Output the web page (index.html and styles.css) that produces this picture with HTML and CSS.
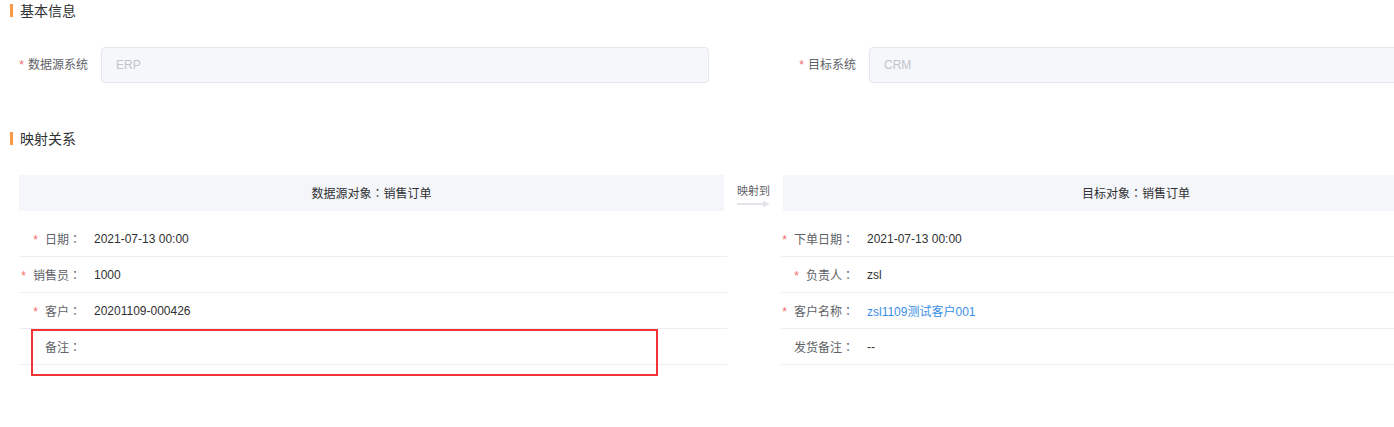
FILE: index.html
```html
<!DOCTYPE html>
<html lang="zh-CN">
<head>
<meta charset="utf-8">
<title>映射关系</title>
<link rel="stylesheet" href="styles.css">
</head>
<body>
<div class="page">
  <div class="section-title"><span class="bar"></span>基本信息</div>

  <div class="form-row">
    <div class="form-item">
      <label class="form-label"><span class="req">*</span>数据源系统</label>
      <div class="input">ERP</div>
    </div>
    <div class="form-item">
      <label class="form-label"><span class="req">*</span>目标系统</label>
      <div class="input">CRM</div>
    </div>
  </div>

  <div class="section-title second"><span class="bar"></span>映射关系</div>

  <div class="mapping">
    <div class="map-table src">
      <div class="map-head">数据源对象<span class="colon" lang="zh-TW">：</span>销售订单</div>
      <div class="map-row"><div class="lbl"><span class="req">*</span>日期<span class="colon" lang="zh-TW">：</span></div><div class="val">2021-07-13 00:00</div></div>
      <div class="map-row"><div class="lbl"><span class="req">*</span>销售员<span class="colon" lang="zh-TW">：</span></div><div class="val">1000</div></div>
      <div class="map-row"><div class="lbl"><span class="req">*</span>客户<span class="colon" lang="zh-TW">：</span></div><div class="val">20201109-000426</div></div>
      <div class="map-row annotated"><div class="lbl">备注<span class="colon" lang="zh-TW">：</span></div><div class="val"></div><div class="highlight"></div></div>
    </div>

    <div class="map-arrow">
      <span class="arrow-text">映射到</span>
      <svg class="arrow-icon" width="33" height="8" viewBox="0 0 33 8">
        <rect x="0" y="3" width="27" height="2" fill="#e1e3e8"/>
        <path d="M26 0.5 L32.5 4 L26 7.5 Z" fill="#e1e3e8"/>
      </svg>
    </div>

    <div class="map-table dst">
      <div class="map-head">目标对象<span class="colon" lang="zh-TW">：</span>销售订单</div>
      <div class="map-row"><div class="lbl"><span class="req">*</span>下单日期<span class="colon" lang="zh-TW">：</span></div><div class="val">2021-07-13 00:00</div></div>
      <div class="map-row"><div class="lbl"><span class="req">*</span>负责人<span class="colon" lang="zh-TW">：</span></div><div class="val">zsl</div></div>
      <div class="map-row"><div class="lbl"><span class="req">*</span>客户名称<span class="colon" lang="zh-TW">：</span></div><div class="val"><a class="link">zsl1109测试客户001</a></div></div>
      <div class="map-row"><div class="lbl">发货备注<span class="colon" lang="zh-TW">：</span></div><div class="val">--</div></div>
    </div>
  </div>
</div>
</body>
</html>
```

FILE: styles.css
```css
html {
  overflow: hidden;
  background: #ffffff;
}

body {
  margin: 0;
  padding: 0;
  font-family: "Liberation Sans", "Noto Sans CJK SC", sans-serif;
  font-size: 12px;
  color: #303133;
}

.page {
  width: 1490px;
  padding-bottom: 40px;
}

.section-title {
  display: flex;
  align-items: center;
  height: 20px;
  font-size: 14px;
  color: #303133;
}

.section-title.second {
  margin-top: 45px;
}

.bar {
  width: 3px;
  height: 13px;
  background: #fa9a45;
  margin-left: 10px;
  margin-right: 7px;
}

.req {
  color: #f56c6c;
  margin-right: 4px;
}

.colon {
  font-family: "Noto Sans CJK TC", "Noto Sans CJK SC", sans-serif;
}

.form-row {
  display: flex;
  gap: 59px;
  margin-top: 27px;
}

.form-item {
  display: flex;
  width: 709px;
}

.form-label {
  width: 101px;
  box-sizing: border-box;
  padding-right: 13px;
  text-align: right;
  line-height: 36px;
  color: #606266;
  font-size: 12px;
}

.input {
  flex: 1;
  height: 36px;
  box-sizing: border-box;
  border: 1px solid #e4e7ed;
  border-radius: 4px;
  background: #f5f7fa;
  padding: 0 14px;
  line-height: 34px;
  color: #c0c4cc;
  font-size: 12px;
}

.mapping {
  display: grid;
  grid-template-columns: 708px 54px 708px;
  padding-left: 19px;
  margin-top: 27px;
}

.map-head {
  height: 36px;
  line-height: 36px;
  background: #f5f6fa;
  text-align: center;
  color: #303133;
  margin-bottom: 10px;
}

.src .map-head {
  margin-right: 3px;
}

.dst .map-head {
  margin-left: 2px;
}

.map-row {
  display: flex;
  align-items: center;
  height: 36px;
  box-sizing: border-box;
  border-bottom: 1px solid #ebeef5;
  padding-left: 1px;
}

.map-row .req {
  margin-right: 7px;
}

.lbl {
  text-align: right;
  color: #606266;
  flex: none;
}

.src .lbl {
  width: 61px;
}

.dst .lbl {
  width: 72px;
}

.val {
  margin-left: 13px;
  color: #303133;
}

.link {
  color: #3a8ee6;
  text-decoration: none;
}

.annotated {
  position: relative;
}

.highlight {
  position: absolute;
  top: 0;
  left: 12px;
  width: 627px;
  height: 47px;
  box-sizing: border-box;
  border: 2px solid #f23333;
}

.map-arrow {
  display: flex;
  flex-direction: column;
  align-items: flex-start;
  padding-left: 10px;
  padding-top: 10px;
}

.arrow-text {
  font-size: 11px;
  line-height: 13px;
  color: #606266;
}

.arrow-icon {
  display: block;
  margin-top: 2px;
}
```
